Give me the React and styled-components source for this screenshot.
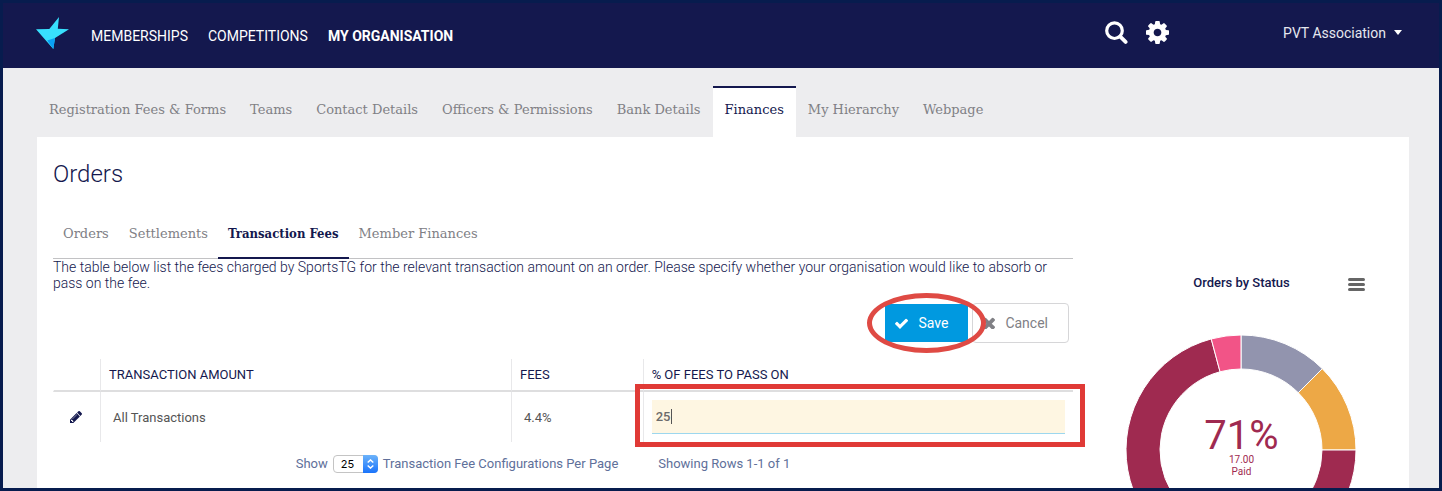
import React, { Fragment, useState } from 'react';
import styled, { createGlobalStyle, css } from 'styled-components';

const NAVY = '#14184e';
const SANS = "Roboto, 'Liberation Sans', sans-serif";
const SLAB = "'Roboto Slab', 'DejaVu Serif', serif";
const SLAB_BOLD = "'Roboto Slab', 'DejaVu Serif Condensed', serif";

const GlobalStyle = createGlobalStyle`
  * {
    box-sizing: border-box;
  }
  body {
    margin: 0;
    font-family: ${SANS};
    font-size: 13px;
    color: ${NAVY};
  }
  button, input, select {
    font-family: inherit;
    margin: 0;
  }
`;

const Page = styled.div`
  height: 100vh;
  overflow: hidden;
  border: 3px solid #071c4e;
  background: #ededef;
`;

const Header = styled.header`
  display: flex;
  align-items: center;
  height: 65px;
  padding: 0 37px 6px 33px;
  background: ${NAVY};
`;

const MainNav = styled.nav`
  display: flex;
  gap: 20px;
  margin: 7px auto 0 22px;
`;

const MainNavLink = styled.a`
  color: #fff;
  font-size: 14px;
  line-height: 20px;
  font-weight: ${(props) => (props.$active ? 700 : 400)};
  text-decoration: none;
`;

const HeaderIcons = styled.div`
  display: flex;
  gap: 18px;
  margin-right: 114px;
`;

const IconButton = styled.button`
  display: flex;
  padding: 0;
  border: 0;
  background: none;
  color: #fff;
`;

const AccountButton = styled.button`
  display: flex;
  align-items: center;
  gap: 8px;
  padding: 0;
  border: 0;
  background: none;
  color: #e6e7ee;
  font-size: 14px;
  line-height: 20px;
`;

const Container = styled.div`
  padding: 18px 30px 0 34px;
`;

const TabList = styled.nav`
  display: flex;
`;

const Tab = styled.a`
  height: 51px;
  padding: 0 12px;
  border-top: 2px solid transparent;
  color: #808085;
  font-family: ${SLAB};
  font-size: 13px;
  line-height: 43px;
  text-decoration: none;
  ${(props) => props.$active && css`
    border-top-color: ${NAVY};
    background: #fff;
    color: ${NAVY};
  `}
`;

const Card = styled.main`
  display: grid;
  grid-template-columns: minmax(0, 1fr) 304px;
  gap: 16px;
  padding: 16px;
  background: #fff;
`;

const Title = styled.h1`
  margin: 0 0 14px;
  font-size: 24px;
  font-weight: 300;
  line-height: 42px;
`;

const SubTabList = styled.nav`
  display: flex;
  height: 50px;
  box-shadow: inset 0 -1px 0 #c2c2c4;
`;

const SubTab = styled.a`
  padding: 0 10px;
  border-bottom: 2px solid transparent;
  color: #808085;
  font-family: ${SLAB};
  font-size: 13px;
  line-height: 50px;
  text-decoration: none;
  ${(props) => props.$active && css`
    border-bottom-color: ${NAVY};
    color: ${NAVY};
    font-family: ${SLAB_BOLD};
    font-weight: 700;
  `}
`;

const Description = styled.p`
  margin: 0 0 12px;
  font-size: 14px;
  font-weight: 300;
  line-height: 16px;
`;

const Actions = styled.div`
  display: flex;
  justify-content: flex-end;
  gap: 3px;
  padding-right: 4px;
  margin-bottom: 16px;
`;

const ActionButton = styled.button`
  display: flex;
  align-items: center;
  gap: 10px;
  height: 40px;
  padding: 0 20px 0 10px;
  border: 1px solid #d6d6d8;
  border-radius: 4px;
  background: #fff;
  color: #808085;
  font-size: 14px;
  ${(props) => props.$primary && css`
    border-color: #fff;
    border-radius: 0;
    background: #0099e0;
    color: #fff;
  `}
`;

const Highlighted = styled.div`
  position: relative;
`;

const EllipseMark = styled.span`
  position: absolute;
  inset: -10px -17px;
  border: 5px solid #df4a44;
  border-radius: 50%;
  pointer-events: none;
`;

const BoxMark = styled.span`
  position: absolute;
  inset: -16px -20px -13px -17px;
  border: 5px solid #e03a36;
  pointer-events: none;
`;

const FeesTable = styled.table`
  width: 100%;
  table-layout: fixed;
  border-collapse: separate;
  border-spacing: 0;
`;

const HeadCell = styled.th`
  width: ${(props) => props.$width};
  height: 33px;
  padding: 0 8px;
  border-left: 1px solid ${(props) => (props.$first ? 'transparent' : '#e8e8ea')};
  border-bottom: 2px solid #dededf;
  font-size: 13px;
  font-weight: 400;
  text-align: left;
`;

const Cell = styled.td`
  height: 50px;
  padding: 0 ${(props) => (props.$edit ? 8 : 12)}px;
  border-left: 1px solid ${(props) => (props.$first ? 'transparent' : '#e8e8ea')};
  color: #555;
  font-size: 13px;
`;

const EditButton = styled(IconButton)`
  margin-left: 4px;
  color: ${NAVY};
`;

const FeeInput = styled.input`
  display: block;
  width: 100%;
  height: 34px;
  padding: 0 4px;
  border: 0;
  border-bottom: 1px solid #9dd7ee;
  outline: 0;
  background: #fef6e2;
  color: #6b6b6b;
  font-size: 13px;
  font-weight: 500;
`;

const Caret = styled.span`
  position: absolute;
  top: 9px;
  left: 19px;
  width: 1px;
  height: 15px;
  background: #555;
`;

const Pagination = styled.div`
  display: flex;
  justify-content: center;
  gap: 40px;
  margin-top: 12px;
  padding-right: 40px;
  color: #60709a;
  font-size: 13px;
  line-height: 20px;
`;

const PageSize = styled.label`
  display: flex;
  align-items: center;
  gap: 5px;
`;

const SelectWrapper = styled.span`
  position: relative;
  display: flex;
`;

const Select = styled.select`
  appearance: none;
  width: 45px;
  height: 18px;
  padding: 0 0 0 7px;
  border: 1px solid #c4c4c4;
  border-radius: 4px;
  background: #fff;
  color: #000;
  font-family: Inter, 'Liberation Sans', sans-serif;
  font-size: 11px;
`;

const SelectArrows = styled.span`
  position: absolute;
  top: 0;
  right: 0;
  bottom: 0;
  display: flex;
  align-items: center;
  justify-content: center;
  width: 15px;
  border-radius: 0 4px 4px 0;
  background: linear-gradient(#6cb3fa, #1a74fb);
  pointer-events: none;
`;

const ChartPanel = styled.aside`
  padding-top: 120px;
`;

const ChartHeader = styled.div`
  display: grid;
  grid-template-columns: 1fr auto 1fr;
  align-items: center;
  padding: 0 28px 0 29px;
  margin-bottom: 42px;
`;

const ChartTitle = styled.h2`
  grid-column: 2;
  margin: 0;
  font-size: 13px;
  font-weight: 500;
  line-height: 20px;
`;

const ChartMenu = styled(IconButton)`
  justify-self: end;
  margin-top: 2px;
`;

const Chart = styled.div`
  position: relative;
  width: 230px;
  margin: 0 auto;
`;

const ChartLabel = styled.div`
  position: absolute;
  top: 83px;
  left: 1px;
  right: 0;
  color: #9f2a50;
  font-size: 10px;
  line-height: 12px;
  text-align: center;
`;

const ChartValue = styled.div`
  font-size: 40px;
  line-height: 36px;
`;

const ICONS = {
  cog: 'M1152 896q0-106-75-181t-181-75-181 75-75 181 75 181 181 75 181-75 75-181zm512-109v222q0 12-8 23t-20 13l-185 28q-19 54-39 91 35 50 107 138 10 12 10 25t-9 23q-27 37-99 108t-94 71q-12 0-26-9l-138-108q-44 23-91 38-16 136-29 186-7 28-36 28h-222q-14 0-24.5-8.5t-11.5-21.5l-28-184q-49-16-90-37l-141 107q-10 9-25 9-14 0-25-11-126-114-165-168-7-10-7-23 0-12 8-23 15-21 51-66.5t54-70.5q-27-50-41-99l-183-27q-13-2-21-12.5t-8-23.5v-222q0-12 8-23t19-13l186-28q14-46 39-92-40-57-107-138-10-12-10-24 0-10 9-23 26-36 98.5-107.5t94.5-71.5q13 0 26 10l138 107q44-23 91-38 16-136 29-186 7-28 36-28h222q14 0 24.5 8.5t11.5 21.5l28 184q49 16 90 37l142-107q9-9 24-9 13 0 25 10 129 119 165 170 7 8 7 22 0 12-8 23-15 21-51 66.5t-54 70.5q26 50 41 98l183 28q13 2 21 12.5t8 23.5z',
  pencil: 'M491 1536l91-91-235-235-91 91v107h128v128h107zm523-928q0-22-22-22-10 0-17 7l-542 542q-7 7-7 17 0 22 22 22 10 0 17-7l542-542q7-7 7-17zm-54-192l416 416-832 832h-416v-416zm683 96q0 53-37 90l-166 166-416-416 166-165q36-38 90-38 53 0 91 38l235 234q37 39 37 91z',
  check: 'M1671 566q0 40-28 68l-724 724-136 136q-28 28-68 28t-68-28l-136-136-362-362q-28-28-28-68t28-68l136-136q28-28 68-28t68 28l294 295 656-657q28-28 68-28t68 28l136 136q28 28 28 68z',
  times: 'M1490 1322q0 40-28 68l-136 136q-28 28-68 28t-68-28l-294-294-294 294q-28 28-68 28t-68-28l-136-136q-28-28-28-68t28-68l294-294-294-294q-28-28-28-68t28-68l136-136q28-28 68-28t68 28l294 294 294-294q28-28 68-28t68 28l136 136q28 28 28 68t-28 68l-294 294 294 294q28 28 28 68z',
};

// crop of the 1792 unit icon grid used by each glyph
const VIEW_BOXES = {
  cog: '128 128 1536 1536',
  pencil: '128 149 1515 1515',
  check: '121 128 1550 1550',
  times: '302 302 1188 1188',
};

const Icon = ({ name, size }) => (
  <svg width={size} height={size} viewBox={VIEW_BOXES[name]} fill="currentColor" aria-hidden="true">
    <path d={ICONS[name]} />
  </svg>
);

const Logo = () => (
  <svg width="33" height="32" viewBox="0 0 33 32" role="img" aria-label="SportsTG">
    <path d="M0 12.3L13.3 12L23 0L21.8 11.7L33 12.3L19 21L17.3 32Z" fill="#38e0fd" />
    <path d="M11.2 23.6L19 21L17.3 32Z" fill="#0aa0f5" />
  </svg>
);

const SearchIcon = () => (
  <svg width="23" height="23" viewBox="0 0 23 23" fill="none" stroke="currentColor" aria-hidden="true">
    <circle cx="9.5" cy="9.7" r="7.8" strokeWidth="3.2" />
    <path d="M15.3 15.6L20.6 20.9" strokeWidth="3.8" strokeLinecap="round" />
  </svg>
);

const mainLinks = ['MEMBERSHIPS', 'COMPETITIONS', 'MY ORGANISATION'];

const tabs = [
  'Registration Fees & Forms',
  'Teams',
  'Contact Details',
  'Officers & Permissions',
  'Bank Details',
  'Finances',
  'My Hierarchy',
  'Webpage',
];

const subTabs = ['Orders', 'Settlements', 'Transaction Fees', 'Member Finances'];

const statuses = [
  { count: 3, color: '#9294ae' },
  { count: 3, color: '#eda846' },
  { count: 17, color: '#9f2a50' },
  { count: 1, color: '#f25487' },
];

const point = (radius, share) => {
  const angle = share * 2 * Math.PI;
  return `${115 + radius * Math.sin(angle)} ${115 - radius * Math.cos(angle)}`;
};

const slicePath = (from, to) => {
  const large = to - from > 0.5 ? 1 : 0;
  return `M${point(115, from)}A115 115 0 ${large} 1 ${point(115, to)}L${point(81, to)}A81 81 0 ${large} 0 ${point(81, from)}Z`;
};

const Donut = () => {
  const total = statuses.reduce((sum, item) => sum + item.count, 0);
  let offset = 0;
  return (
    <svg width="230" height="230" viewBox="0 0 230 230" display="block" aria-hidden="true">
      {statuses.map((item, index) => {
        const from = offset / total;
        offset += item.count;
        return (
          <path key={index} d={slicePath(from, offset / total)} fill={item.color} stroke="#fff" />
        );
      })}
    </svg>
  );
};

export default function App() {
  const [fee, setFee] = useState('25');

  return (
    <Fragment>
      <GlobalStyle />
      <Page>
        <Header>
          <Logo />
          <MainNav>
            {mainLinks.map((item) => (
              <MainNavLink href="#" key={item} $active={item === 'MY ORGANISATION'}>{item}</MainNavLink>
            ))}
          </MainNav>
          <HeaderIcons>
            <IconButton aria-label="Search"><SearchIcon /></IconButton>
            <IconButton aria-label="Settings"><Icon name="cog" size={23} /></IconButton>
          </HeaderIcons>
          <AccountButton>
            PVT Association
            <svg width="8" height="5" viewBox="0 0 8 5" aria-hidden="true">
              <path d="M0 0H8L4 5Z" fill="#fff" />
            </svg>
          </AccountButton>
        </Header>
        <Container>
          <TabList>
            {tabs.map((item) => (
              <Tab href="#" key={item} $active={item === 'Finances'}>{item}</Tab>
            ))}
          </TabList>
          <Card>
            <section>
              <Title>Orders</Title>
              <SubTabList>
                {subTabs.map((item) => (
                  <SubTab href="#" key={item} $active={item === 'Transaction Fees'}>{item}</SubTab>
                ))}
              </SubTabList>
              <Description>
                The table below list the fees charged by SportsTG for the relevant transaction amount on an order. Please specify whether your organisation would like to absorb or pass on the fee.
              </Description>
              <Actions>
                <Highlighted>
                  <ActionButton $primary><Icon name="check" size={13} />Save</ActionButton>
                  <EllipseMark />
                </Highlighted>
                <ActionButton><Icon name="times" size={12} />Cancel</ActionButton>
              </Actions>
              <FeesTable>
                <thead>
                  <tr>
                    <HeadCell $first $width="47px" />
                    <HeadCell $width="40.3%">TRANSACTION AMOUNT</HeadCell>
                    <HeadCell $width="12.9%">FEES</HeadCell>
                    <HeadCell>% OF FEES TO PASS ON</HeadCell>
                  </tr>
                </thead>
                <tbody>
                  <tr>
                    <Cell $first>
                      <EditButton aria-label="Edit"><Icon name="pencil" size={12} /></EditButton>
                    </Cell>
                    <Cell>All Transactions</Cell>
                    <Cell>4.4%</Cell>
                    <Cell $edit>
                      <Highlighted>
                        <FeeInput
                          aria-label="% of fees to pass on"
                          value={fee}
                          onChange={(e) => setFee(e.target.value)}
                        />
                        <Caret />
                        <BoxMark />
                      </Highlighted>
                    </Cell>
                  </tr>
                </tbody>
              </FeesTable>
              <Pagination>
                <PageSize>
                  Show
                  <SelectWrapper>
                    <Select defaultValue="25">
                      <option>10</option>
                      <option>25</option>
                      <option>50</option>
                    </Select>
                    <SelectArrows>
                      <svg width="7" height="10" viewBox="0 0 7 10" fill="none" stroke="#fff" strokeWidth="1.4" aria-hidden="true">
                        <path d="M0.7 3.6L3.5 0.9L6.3 3.6M0.7 6.4L3.5 9.1L6.3 6.4" />
                      </svg>
                    </SelectArrows>
                  </SelectWrapper>
                  Transaction Fee Configurations Per Page
                </PageSize>
                <span>Showing Rows 1-1 of 1</span>
              </Pagination>
            </section>
            <ChartPanel>
              <ChartHeader>
                <ChartTitle>Orders by Status</ChartTitle>
                <ChartMenu aria-label="Chart menu">
                  <svg width="17" height="13" viewBox="0 0 17 13" stroke="#666" strokeWidth="3" strokeLinecap="round" aria-hidden="true">
                    <path d="M1.5 1.5H15.5M1.5 6.5H15.5M1.5 11.5H15.5" />
                  </svg>
                </ChartMenu>
              </ChartHeader>
              <Chart>
                <Donut />
                <ChartLabel>
                  <ChartValue>71%</ChartValue>
                  <div>17.00</div>
                  <div>Paid</div>
                </ChartLabel>
              </Chart>
            </ChartPanel>
          </Card>
        </Container>
      </Page>
    </Fragment>
  );
}
